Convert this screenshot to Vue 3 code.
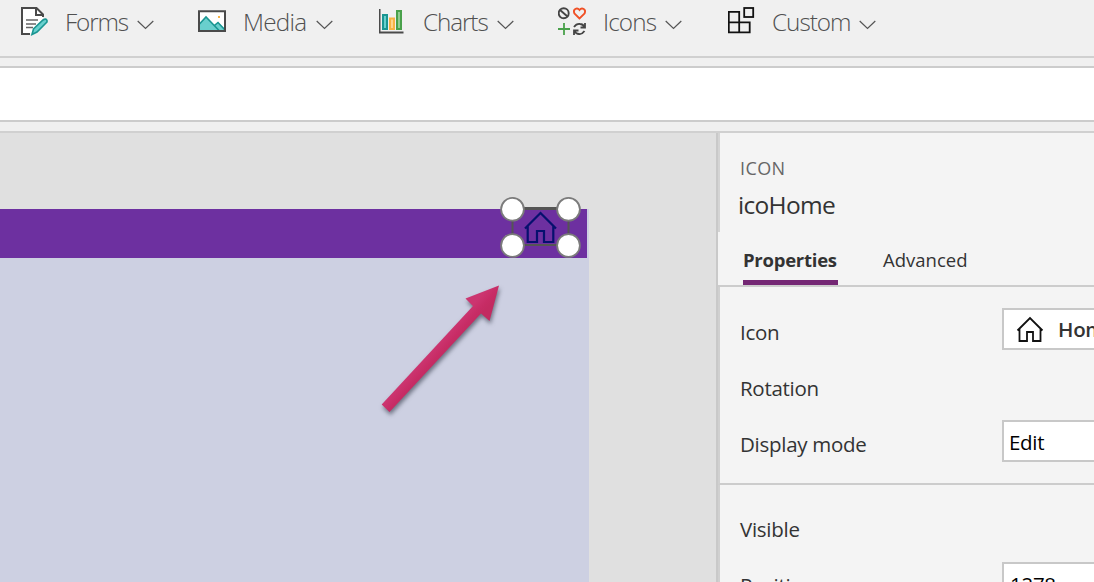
<script setup>
const menus = [
  { name: 'forms', label: 'Forms' },
  { name: 'media', label: 'Media' },
  { name: 'charts', label: 'Charts' },
  { name: 'icons', label: 'Icons' },
  { name: 'custom', label: 'Custom' },
]
</script>

<template>
  <div class="studio">
    <nav class="toolbar">
      <div v-for="m in menus" :key="m.name" class="menu" :class="m.name">
        <svg v-if="m.name === 'forms'" class="glyph" width="30" height="32" viewBox="0 0 30 32">
          <path d="M1 3H15.5L22 9.5V15L9 29V29H1Z" fill="#fff" />
          <path d="M9 29H1V3H15.5L22 9.5V12M15 3V10H22" fill="none" stroke="#4a4a4a" stroke-width="2" />
          <path d="M5 15H17M5 19H15M5 22.500H12" stroke="#666" stroke-width="1.500" />
          <path d="M11 29.500L12.500 24L22 15Q25 13 26 15.500V17L16 27Z" fill="#69d0ce" stroke="#1a9692" stroke-width="1.600" />
        </svg>
        <svg v-else-if="m.name === 'media'" class="glyph" width="30" height="32" viewBox="0 0 30 32">
          <path d="M1 6H27V26H1Z" fill="#fff" />
          <path d="M1 19L8 12.500L16 20L20 17L27 24V26H1Z" fill="#69cfcd" />
          <path d="M1.500 19L8 12L21.500 26M16.500 20.500L20 17.500L27 25" fill="none" stroke="#1a9692" stroke-width="1.600" />
          <path d="M1 6.200H27V26H1Z" fill="none" stroke="#4a4a4a" stroke-width="2" />
          <rect x="20" y="11" width="2" height="2" fill="#f7b344" />
        </svg>
        <svg v-else-if="m.name === 'charts'" class="glyph" width="30" height="32" viewBox="0 0 30 32">
          <path d="M.500 4V27.500H24.500" fill="none" stroke="#4a4a4a" stroke-width="2" />
          <rect x="4" y="10" width="4" height="14" fill="#69cfcd" stroke="#1a9692" stroke-width="2" />
          <rect x="11" y="13.500" width="4" height="10.500" fill="#ffd48b" stroke="#f7b344" stroke-width="2" />
          <rect x="18" y="6" width="4" height="18" fill="#91cc91" stroke="#49a14b" stroke-width="2" />
        </svg>
        <svg v-else-if="m.name === 'icons'" class="glyph" width="30" height="32" viewBox="0 0 30 32" fill="none">
          <circle cx="5.700" cy="8.300" r="5" stroke="#444" stroke-width="1.900" />
          <path d="M2 5L9.500 11.500" stroke="#444" stroke-width="1.900" />
          <path d="M21.500 13.500L16.400 8.500C14.500 4.500 19 1.800 21.500 5C24 1.800 28.500 4.500 26.600 8.500Z" stroke="#f05025" stroke-width="1.800" />
          <path d="M0 24H12M6 18V30" stroke="#49a14b" stroke-width="1.800" />
          <path d="M16 22Q18.500 18.500 22 19Q25 19 26.500 22M27 18V22.500H22.500M26.500 26Q24 29.500 21 29Q18 29 16.500 26M16 30V25.500H20.500" stroke="#444" stroke-width="1.800" />
        </svg>
        <svg v-else class="glyph" width="30" height="32" viewBox="0 0 30 32">
          <path d="M.800 6.800H11.200V27.400H.800ZM.800 17.400H21.700V27.400H.800M11.200 17V27" fill="none" stroke="#111" stroke-width="1.800" />
          <rect x="16.200" y="3" width="9" height="9" fill="none" stroke="#111" stroke-width="1.800" />
        </svg>
        <span class="label">{{ m.label }}</span>
        <svg class="chevron" width="17" height="10" viewBox="0 0 17 10"><path d="M.700 1L8.500 8.500L16.300 1" fill="none" stroke="#555" stroke-width="1.200" /></svg>
      </div>
    </nav>
    <div class="formula"></div>
    <main class="workspace">
      <section class="stage">
        <div class="screen">
          <div class="header"></div>
          <svg class="selection" width="84" height="64" viewBox="0 0 84 64">
            <path d="M14.500 13H70.500V49H14.500Z" fill="none" stroke="#555" stroke-width="2" />
            <path d="M14 12.500H70" stroke="#555" stroke-width="3" />
            <path d="M27 32.500L42.500 17L58 32.500M29.700 30V46H39V35H46V46H55.300V30" fill="none" stroke="#06106e" stroke-width="2.200" />
            <g fill="#fff" stroke="#7b7b7b" stroke-width="1.800"><circle cx="14.500" cy="13.300" r="11.400" /><circle cx="70.500" cy="13.300" r="11.400" /><circle cx="14.500" cy="49.500" r="11.400" /><circle cx="70.500" cy="49.500" r="11.400" /></g>
          </svg>
          <svg class="arrow" width="150" height="160" viewBox="0 0 150 160">
            <defs><linearGradient id="shade" gradientUnits="userSpaceOnUse" x1="60" y1="82" x2="70" y2="91"><stop offset="0" stop-color="#cc3570" /><stop offset=".6" stop-color="#c72c65" /><stop offset="1" stop-color="#c32b61" /></linearGradient></defs>
            <path d="M129 15.500L95.500 28.500L103 36L11.700 134.500L19.500 142L111 43.500L119.500 51Z" fill="url(#shade)" />
          </svg>
        </div>
      </section>
      <aside class="panel">
        <header class="identity">
          <div class="kind">ICON</div>
          <div class="name">icoHome</div>
        </header>
        <div class="tabs"><div class="tab active">Properties</div><div class="tab">Advanced</div></div>
        <div class="group">
          <div class="row"><span>Icon</span>
            <div class="field picker">
              <svg width="28" height="28" viewBox="0 0 28 28"><path d="M1.500 14.500L14 2L26.500 14.500M3.500 12.500V25H11V16H17V25H24.500V12.500" fill="none" stroke="#111" stroke-width="1.800" /></svg>
              <b>Home</b>
            </div>
          </div>
          <div class="row"><span>Rotation</span></div>
          <div class="row"><span>Display mode</span><div class="field">Edit</div></div>
        </div>
        <div class="group second">
          <div class="row"><span>Visible</span></div>
          <div class="row"><span>Position</span><div class="field number">1278</div></div>
        </div>
      </aside>
    </main>
  </div>
</template>

<style>
body { margin: 0; overflow: hidden; }
</style>

<style scoped>
* { box-sizing: border-box; }
.studio { width: 1094px; height: 582px; overflow: hidden; display: flex; flex-direction: column; background: #f0f0f0; color: #333; font-family: "Open Sans", "Noto Sans", sans-serif; }
.toolbar { height: 58px; flex: none; display: grid; grid-template-columns: 177px 181px 179px 170px 170px; padding-left: 21px; border-bottom: 2px solid #d0d0d0; }
.menu { display: flex; height: 45px; padding-top: 5px; }
.glyph { flex: none; margin-right: 14px; }
.label { width: 72px; flex: none; font-size: 24.300px; line-height: 34px; font-weight: 300; color: #505050; letter-spacing: -1.150px; white-space: nowrap; }
.media .label { width: 74px; padding-left: 1px; letter-spacing: -.750px; }
.charts .label { width: 74px; letter-spacing: -1.100px; }
.icons .label { width: 63px; padding-left: 1px; letter-spacing: -.900px; }
.custom .label { width: 87px; letter-spacing: -1px; }
.chevron { flex: none; margin-top: 15px; }
.formula { margin-top: 8px; height: 56px; flex: none; background: #fff; border: solid #ccc; border-width: 2px 0; }
.workspace { margin-top: 9px; height: 451px; flex: none; display: flex; border-top: 2px solid #d0d0d0; }
.stage { width: 716px; flex: none; padding-top: 76px; background: #e0e0e0; }
.screen { position: relative; width: 589px; height: 373px; background: #cdd0e2; }
.header { width: 587px; height: 49px; background: #6d30a0; }
.selection { position: absolute; left: 498px; top: -13px; }
.arrow { position: absolute; left: 370px; top: 61px; filter: drop-shadow(1px 3px 2px rgba(45, 50, 65, .6)); }
.panel { width: 378px; flex: none; background: #f4f4f4; border-left: 2px solid #c9c9c9; font-size: 20.500px; letter-spacing: -.280px; }
.identity { height: 99px; padding: 21px 0 0 20px; border-left: 2px solid #d4d4d4; }
.kind { height: 28px; font-size: 18px; line-height: 28px; color: #666; letter-spacing: .400px; }
.name { height: 46px; margin-left: -2px; font-size: 24.500px; line-height: 45px; letter-spacing: -.700px; }
.tabs { height: 55px; display: flex; gap: 45px; padding-left: 25px; border-bottom: 2px solid #ccc; }
.tab { height: 53px; padding-top: 11px; font-size: 18.500px; line-height: 34px; letter-spacing: 0; border-bottom: 5px solid transparent; }
.active { width: 95px; font-weight: 700; letter-spacing: -.250px; border-color: #742774; }
.group { height: 198px; padding: 17px 0 0 20px; border-left: 2px solid #d0d0d0; border-bottom: 2px solid #ccc; }
.second { padding-top: 16px; }
.row { height: 56px; display: flex; justify-content: space-between; line-height: 56px; white-space: nowrap; }
.field { width: 92px; height: 42px; margin-top: 4px; padding-left: 5px; overflow: hidden; background: #fff; border: 2px solid #c8c8c8; border-right: 0; color: #000; line-height: 40px; }
.picker { display: flex; align-items: center; padding-left: 12px; gap: 14px; color: #333; }
.picker svg { flex: none; margin-top: 2px; }
.picker b { font-weight: 600; }
.number { margin-top: 5px; padding-left: 6px; }
</style>
